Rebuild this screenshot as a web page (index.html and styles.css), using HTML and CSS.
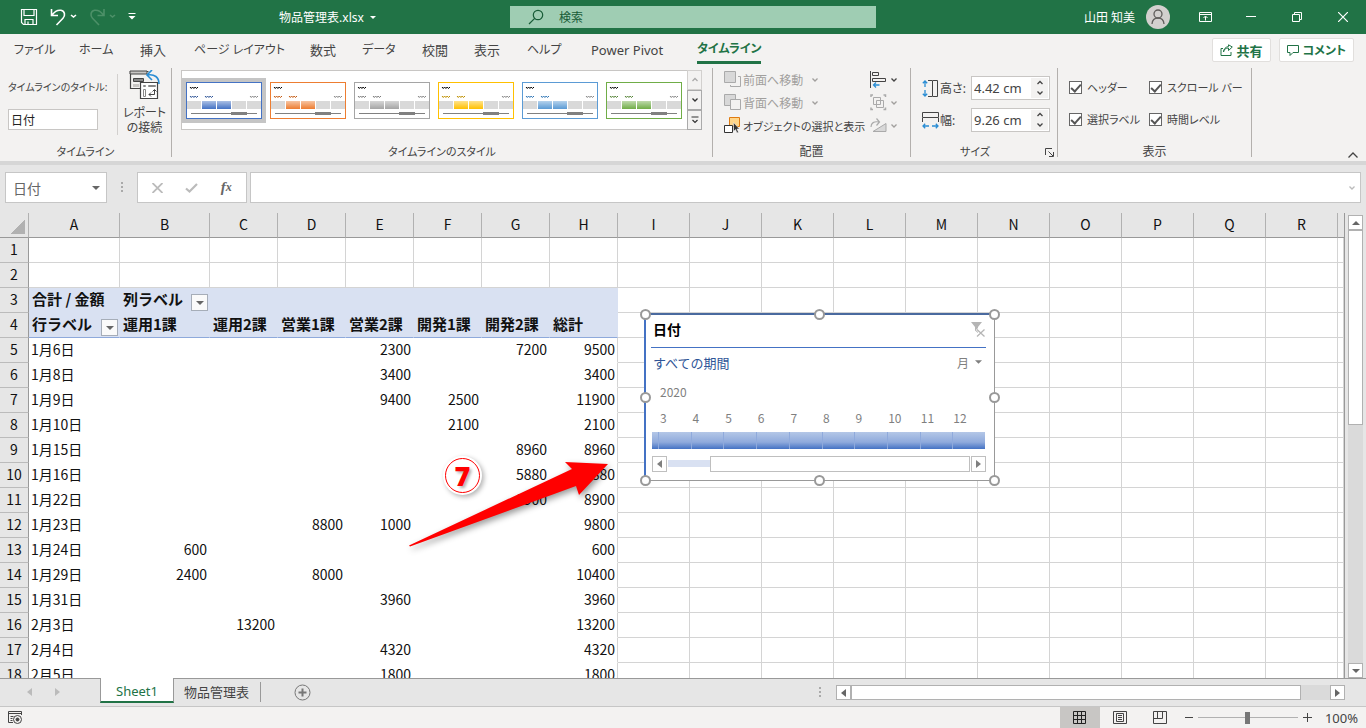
FILE: index.html
```html
<!DOCTYPE html>
<html lang="ja">
<head>
    <meta charset="UTF-8">
    <meta name="viewport" content="width=device-width, initial-scale=1.0">
    <title>物品管理表.xlsx</title>
    <link rel="stylesheet" href="styles.css">
</head>
<body>
    <!-- shared icons -->
    <svg class="defs" aria-hidden="true">
        <defs>
            <linearGradient id="shine" x1="0" y1="0" x2="0" y2="1">
                <stop offset="0" stop-color="#fff" stop-opacity=".55"/>
                <stop offset="1" stop-color="#fff" stop-opacity="0"/>
            </linearGradient>
            <symbol id="thumb" viewBox="0 0 76 37">
                <rect x=".5" y=".5" width="75" height="36" fill="#fff" stroke="var(--c)"/>
                <path d="M4 5l1.3 1.5L6.6 5l1.3 1.5L9.2 5l1.3 1.5L12 5" fill="none" stroke="#000"/>
                <path d="M4 14l1.3 1.5L6.6 14l1.3 1.5L9.2 14l1.3 1.5L12 14M19 14l1.3 1.5L21.6 14l1.3 1.5L24.2 14l1.3 1.5L27 14" fill="none" stroke="var(--d)"/>
                <path d="M64 14l1.3 1.5L66.6 14l1.3 1.5L69.2 14l1.3 1.5L72 14" fill="none" stroke="#888"/>
                <path d="M1 19h14v8H1zM46 19h14v8H46zM61 19h14v8H61z" fill="#d9d9d9"/>
                <path d="M16 19h14v8H16zM31 19h14v8H31z" fill="var(--c)"/>
                <path d="M16 19h14v8H16zM31 19h14v8H31z" fill="url(#shine)"/>
                <path d="M5 31h66v1H5zM45 30h16v3H45z" fill="#808080"/>
            </symbol>
            <symbol id="chev" viewBox="0 0 8 6"><path d="M1.500 1.500L4 4l2.500-2.500" fill="none" stroke="currentColor" stroke-width="1.300"/></symbol>
            <symbol id="chevup" viewBox="0 0 8 6"><path d="M1.500 4L4 1.500 6.500 4" fill="none" stroke="currentColor" stroke-width="1.300"/></symbol>
            <symbol id="tri" viewBox="0 0 8 4"><path d="M0 0h8L4 4z" fill="currentColor"/></symbol>
            <symbol id="triup" viewBox="0 0 8 4"><path d="M0 4h8L4 0z" fill="currentColor"/></symbol>
            <symbol id="trileft" viewBox="0 0 5 8"><path d="M5 0v8L0 4z" fill="currentColor"/></symbol>
            <symbol id="triright" viewBox="0 0 5 8"><path d="M0 0v8l5-4z" fill="currentColor"/></symbol>
        </defs>
    </svg>

    <header class="titlebar">
        <div class="quick">
            <button aria-label="上書き保存"><svg width="18" height="18" viewBox="0 0 18 18" fill="none" stroke="#fff" stroke-width="1.200"><path d="M1.500 1.500h15v15h-13l-2-2zM4 1.500v6h10v-6M5 16.500v-5h8v5M8 16v-2.500"/></svg></button>
            <button class="undo" aria-label="元に戻す"><svg width="27" height="18" viewBox="0 0 27 18" fill="none" stroke="#fff" stroke-width="1.600"><path d="M1.500 1v6.500H8M2 7C5 3 8 1.800 11 2.300c4 .7 4.500 5.500 2 8L6.500 17"/><path d="M21 7l2.500 2L26 7"/></svg></button>
            <button class="redo" aria-label="やり直し"><svg width="27" height="18" viewBox="0 0 27 18" fill="none" stroke="#4d9068" stroke-width="1.600"><path d="M15 1v6.500H8.500M14.500 7C11.500 3 8.500 1.800 5.500 2.300c-4 .7-4.500 5.500-2 8L10 17"/><path d="M21 7l2.500 2L26 7"/></svg></button>
            <button aria-label="カスタマイズ"><svg width="8" height="8" viewBox="0 0 8 8"><path d="M.5 0h7v1h-7zM.5 3h7L4 6.500z" fill="#fff"/></svg></button>
        </div>
        <button class="filename">物品管理表.xlsx <svg width="6" height="3"><use href="#tri"/></svg></button>
        <label class="search">
            <svg width="16" height="16" viewBox="0 0 16 16" fill="none" stroke="#185c37" stroke-width="1.200"><circle cx="10" cy="6" r="4.700"/><path d="M6.700 9.300L1 15"/></svg>
            <input type="text" placeholder="検索" aria-label="検索">
        </label>
        <div class="account">
            <span>山田 知美</span>
            <svg width="24" height="24" viewBox="0 0 24 24"><circle cx="12" cy="12" r="12" fill="#d2d0ce"/><g fill="none" stroke="#605e5c" stroke-width="1.300"><circle cx="12" cy="9" r="4"/><path d="M6 19c.3-4 3-6 6-6s5.700 2 6 6"/></g></svg>
        </div>
        <div class="winbtns">
            <button aria-label="リボンの表示オプション"><svg width="13" height="10" viewBox="0 0 13 10" fill="none" stroke="#fff"><path d="M.5.5h12v9H.5zM.5 2.500h12M6.500 8.500v-4M4.500 6l2-2 2 2"/></svg></button>
            <button aria-label="最小化"><svg width="10" height="10" viewBox="0 0 10 10" stroke="#fff"><path d="M0 4.500h10"/></svg></button>
            <button aria-label="元に戻す(縮小)"><svg width="10" height="10" viewBox="0 0 10 10" fill="none" stroke="#fff"><path d="M.5 2.500h7v7h-7zM2.500 2.500v-2h7v7h-2"/></svg></button>
            <button aria-label="閉じる"><svg width="10" height="10" viewBox="0 0 10 10" stroke="#fff" stroke-width="1.200"><path d="M0 0l10 10M10 0L0 10"/></svg></button>
        </div>
    </header>

    <nav class="tabs">
        <a href="#">ファイル</a>
        <a href="#">ホーム</a>
        <a href="#" class="kanji">挿入</a>
        <a href="#">ページ レイアウト</a>
        <a href="#" class="kanji">数式</a>
        <a href="#">データ</a>
        <a href="#" class="kanji">校閲</a>
        <a href="#" class="kanji">表示</a>
        <a href="#">ヘルプ</a>
        <a href="#" class="kanji">Power Pivot</a>
        <a href="#" class="active">タイムライン</a>
        <div class="share">
            <button class="kanji"><svg width="13" height="12" viewBox="0 0 13 12" fill="none" stroke="#217346"><path d="M3 4.500H1v7h10V8M3.500 8c.5-3 2.500-4 5-4V6.500L12.300 3 8.500.8v1.700C5.500 3 3.700 5 3.500 8z"/></svg>共有</button>
            <button><svg width="12" height="11" viewBox="0 0 12 11" fill="none" stroke="#217346"><path d="M.5.5h11v7H6l-3 3v-3H.5z"/></svg>コメント</button>
        </div>
    </nav>

    <section class="ribbon">
        <div class="group g-timeline">
            <div class="body">
                <div class="caption">
                    <label for="tlTitle">タイムラインのタイトル:</label>
                    <input type="text" id="tlTitle" value="日付">
                </div>
                <button class="report">
                    <svg width="32" height="30" viewBox="0 0 32 30" fill="none">
                        <path d="M11 18.500H1.500v-17h18" stroke="#444" stroke-width="1.200"/><path d="M1 1h17v3H1z" fill="#c8c6c4" stroke="#444"/>
                        <path d="M4.500 8.500h10v3h-10z" fill="#888" stroke="#444"/><path d="M4 14h6v3H4z" fill="#c8c6c4"/>
                        <path d="M11.500 12.500h17v16h-17z" fill="#fff" stroke="#444" stroke-width="1.200"/>
                        <path d="M14.500 15.500h2v1h-2zM19.500 15.500h7v1h-7zM14.500 19.500h2v7h-2z" stroke="#888"/>
                        <path d="M20 24.500h5.500V20M22 22.500l-2 2 2 2M23.500 21.500l2-2 2 2" stroke="#444"/>
                        <path d="M23 0l-5 5 5 5M18.500 5c7-1 11.500 2 11.500 9" stroke="#2a8dd4" stroke-width="1.600"/>
                    </svg>
                    <span>レポート<br>の接続</span>
                </button>
            </div>
            <h2>タイムライン</h2>
        </div>
        <div class="group g-styles">
            <div class="body">
                <div class="gallery">
                    <button class="st blue selected" aria-label="青"><svg width="76" height="37"><use href="#thumb"/></svg></button>
                    <button class="st orange" aria-label="オレンジ"><svg width="76" height="37"><use href="#thumb"/></svg></button>
                    <button class="st gray" aria-label="灰色"><svg width="76" height="37"><use href="#thumb"/></svg></button>
                    <button class="st gold" aria-label="ゴールド"><svg width="76" height="37"><use href="#thumb"/></svg></button>
                    <button class="st sky" aria-label="水色"><svg width="76" height="37"><use href="#thumb"/></svg></button>
                    <button class="st green" aria-label="緑"><svg width="76" height="37"><use href="#thumb"/></svg></button>
                    <div class="gallery-scroll">
                        <button class="off" aria-label="上へ"><svg width="8" height="6"><use href="#chevup"/></svg></button>
                        <button aria-label="下へ"><svg width="8" height="6"><use href="#chev"/></svg></button>
                        <button aria-label="その他"><svg width="8" height="8" viewBox="0 0 8 8" fill="none" stroke="#333" stroke-width="1.200"><path d="M.5 1h7M1.500 4L4 6.500 6.500 4"/></svg></button>
                    </div>
                </div>
            </div>
            <h2>タイムラインのスタイル</h2>
        </div>
        <div class="group g-arrange">
            <div class="body">
                <div class="stack">
                    <button disabled><svg width="17" height="17" viewBox="0 0 17 17" fill="none" stroke="#aaa"><path d="M.5.500h11v11H.5z" fill="#d8d8d8"/><path d="M14 5.500h2.500v10h-10V14"/></svg>前面へ移動<svg class="dd" width="8" height="6"><use href="#chev"/></svg></button>
                    <button disabled><svg width="17" height="17" viewBox="0 0 17 17" stroke="#aaa"><path d="M.5.500h11v11H.5z" fill="#d8d8d8"/><path d="M6.500 5.500h10v10h-10z" fill="#f3f2f1"/></svg>背面へ移動<svg class="dd" width="8" height="6"><use href="#chev"/></svg></button>
                    <button><svg width="17" height="17" viewBox="0 0 17 17"><path d="M5.500.500h10v9h-10z" fill="#ffd68a" stroke="#e07b10"/><path d="M.5 8.500h8v7h-8z" fill="#fff" stroke="#333"/><path d="M9.500 5.500v9l2-2 1.500 3.500 1.500-.8-1.500-3.200h2.500z" fill="#333" stroke="#fff" stroke-width=".5"/></svg>オブジェクトの選択と表示</button>
                </div>
                <div class="stack icons">
                    <button aria-label="配置"><svg width="17" height="17" viewBox="0 0 17 17" fill="none" stroke="#444"><path d="M.5 0v17M2.500 1.500h6v3h-6zM2.500 7.500h13v3h-13z"/><path d="M9.500 14h-6M6 11.500L3.500 14 6 16.500" stroke="#2a8dd4" stroke-width="1.300"/></svg><svg width="8" height="6"><use href="#chev"/></svg></button>
                    <button disabled aria-label="グループ化"><svg width="17" height="17" viewBox="0 0 17 17" fill="none" stroke="#aaa"><path d="M3.500 3.500h7v7h-7zM6.500 6.500h7v7h-7z"/><path d="M1 3V1h2M13.500 1h2v2M1 13.500v2h2M13.500 15.500h2v-2" stroke-width="1.500"/></svg><svg width="8" height="6"><use href="#chev"/></svg></button>
                    <button disabled aria-label="回転"><svg width="17" height="15" viewBox="0 0 17 15" fill="none" stroke="#aaa"><path d="M3 13.500h13v-8z" fill="#d8d8d8"/><path d="M1 9c0-4 3-6 8-5M6.500.5L9.500 4l-3 3.500" stroke-width="1.200"/></svg><svg width="8" height="6"><use href="#chev"/></svg></button>
                </div>
            </div>
            <h2 class="kanji">配置</h2>
        </div>
        <div class="group g-size">
            <div class="body rows">
                <div class="field">
                    <svg width="17" height="17" viewBox="0 0 17 17" fill="none" stroke="#444"><path d="M6 .5h4M6 16.500h4M10.500.500h5v16h-5z"/><path d="M3 1v6M3 10v6M.8 3.200L3 1l2.200 2.200M.8 13.800L3 16l2.200-2.200" stroke="#2a8dd4" stroke-width="1.300"/></svg>
                    <label for="h">高さ:</label>
                    <div class="spin"><input type="text" id="h" value="4.42 cm"><span><button aria-label="増やす"><svg width="8" height="6"><use href="#chevup"/></svg></button><button aria-label="減らす"><svg width="8" height="6"><use href="#chev"/></svg></button></span></div>
                </div>
                <div class="field">
                    <svg width="17" height="17" viewBox="0 0 17 17" fill="none" stroke="#444"><path d="M.5 6v4M16.500 6v4M.5.500h16v5H.5z"/><path d="M1 14h6M10 14h6M3.200 11.800L1 14l2.200 2.200M13.800 11.800L16 14l-2.200 2.200" stroke="#2a8dd4" stroke-width="1.300"/></svg>
                    <label for="w">幅:</label>
                    <div class="spin"><input type="text" id="w" value="9.26 cm"><span><button aria-label="増やす"><svg width="8" height="6"><use href="#chevup"/></svg></button><button aria-label="減らす"><svg width="8" height="6"><use href="#chev"/></svg></button></span></div>
                </div>
            </div>
            <div class="foot"><h2>サイズ</h2><button aria-label="サイズの詳細"><svg width="9" height="9" viewBox="0 0 9 9" fill="none" stroke="#444"><path d="M.5 7V.5H7M3.500 3.500L8 8M8.500 4v4.500H4"/></svg></button></div>
        </div>
        <div class="group g-show">
            <div class="body checks">
                <label><input type="checkbox" checked>ヘッダー</label>
                <label><input type="checkbox" checked>スクロール バー</label>
                <label><input type="checkbox" checked>選択ラベル</label>
                <label><input type="checkbox" checked>時間レベル</label>
            </div>
            <h2 class="kanji">表示</h2>
        </div>
        <button class="collapse" aria-label="リボンを折りたたむ"><svg width="10" height="6" viewBox="0 0 10 6" fill="none" stroke="#444" stroke-width="1.300"><path d="M.5 5.500L5 1l4.500 4.500"/></svg></button>
    </section>

    <section class="formula">
        <div class="namebox"><input type="text" value="日付" aria-label="名前ボックス"><button aria-label="名前の一覧"><svg width="8" height="4"><use href="#tri"/></svg></button></div>
        <svg class="dots" width="2" height="10" viewBox="0 0 2 10" fill="#aaa"><path d="M0 0h2v2H0zM0 4h2v2H0zM0 8h2v2H0z"/></svg>
        <div class="fx">
            <button aria-label="キャンセル"><svg width="11" height="10" viewBox="0 0 11 10" stroke="#bbb" stroke-width="1.800"><path d="M.5 0l10 10M10.500 0l-10 10"/></svg></button>
            <button aria-label="入力"><svg width="13" height="10" viewBox="0 0 13 10" fill="none" stroke="#bbb" stroke-width="2.200"><path d="M1 5.500l3.500 3L12 1"/></svg></button>
            <button class="fn">f<small>x</small></button>
        </div>
        <div class="fbox"><input type="text" aria-label="数式バー"><button aria-label="展開"><svg width="8" height="6"><use href="#chev"/></svg></button></div>
    </section>

    <main class="work">
        <div class="sheet">
            <table class="grid">
                <colgroup>
                    <col class="c-num"><col class="c-a"><col class="c-b">
                    <col class="c-val" span="6"><col class="c-std" span="10"><col>
                </colgroup>
                <thead><tr id="heads"></tr></thead>
                <tbody id="rows"></tbody>
            </table>

            <div class="slicer">
                <i class="hd nw"></i><i class="hd n"></i><i class="hd ne"></i><i class="hd w"></i>
                <i class="hd e"></i><i class="hd sw"></i><i class="hd s"></i><i class="hd se"></i>
                <div class="sl-head"><strong>日付</strong><button aria-label="フィルターのクリア"><svg width="16" height="15" viewBox="0 0 16 15" fill="none" stroke="#b5b5b5"><path d="M1 0h11L8 5v6l-3-2.500V5z" fill="#b5b5b5" stroke="none"/><path d="M7 7l8 8M15 7l-8 8" stroke="#fff" stroke-width="3"/><path d="M7 7.500l7.500 7M14.500 7.500l-7.500 7" stroke-width="1.300"/></svg></button></div>
                <div class="sl-sub"><span>すべての期間</span><button>月 <svg width="7" height="4"><use href="#tri"/></svg></button></div>
                <div class="sl-year">2020</div>
                <div class="sl-months"><span>3</span><span>4</span><span>5</span><span>6</span><span>7</span><span>8</span><span>9</span><span>10</span><span>11</span><span>12</span></div>
                <div class="sl-bar"><i></i><i></i><i></i><i></i><i></i><i></i><i></i><i></i><i></i><i></i></div>
                <div class="sl-scroll">
                    <button aria-label="左へ"><svg width="5" height="8"><use href="#trileft"/></svg></button>
                    <div class="sl-track"><div></div></div>
                    <button aria-label="右へ"><svg width="5" height="8"><use href="#triright"/></svg></button>
                </div>
            </div>

            <svg class="arrow" width="220" height="110" viewBox="0 0 220 110"><path d="M9 95.500L172 19l-7-7 43 2-29 31-3-9L10 96.500z" fill="#f00"/></svg>
            <div class="step">7</div>
        </div>
        <div class="vscroll">
            <button aria-label="上へ"><svg width="8" height="4"><use href="#triup"/></svg></button>
            <div class="track"><div class="bar"></div></div>
            <button aria-label="下へ"><svg width="8" height="4"><use href="#tri"/></svg></button>
        </div>
    </main>

    <footer>
        <div class="sheetbar">
            <div class="sheetnav">
                <button aria-label="前のシート"><svg width="5" height="8"><use href="#trileft"/></svg></button>
                <button aria-label="次のシート"><svg width="5" height="8"><use href="#triright"/></svg></button>
            </div>
            <button class="sheettab current">Sheet1</button>
            <button class="sheettab">物品管理表</button>
            <button class="add" aria-label="新しいシート"><svg width="17" height="17" viewBox="0 0 17 17" fill="none" stroke="#777"><circle cx="8.500" cy="8.500" r="7.500"/><path d="M8.500 4.500v8M4.500 8.500h8" stroke-width="2"/></svg></button>
            <svg class="dots" width="2" height="10" viewBox="0 0 2 10" fill="#aaa"><path d="M0 0h2v2H0zM0 4h2v2H0zM0 8h2v2H0z"/></svg>
            <div class="hscroll">
                <button aria-label="左へ"><svg width="5" height="8"><use href="#trileft"/></svg></button>
                <div class="track"><div class="bar"></div></div>
                <button aria-label="右へ"><svg width="5" height="8"><use href="#triright"/></svg></button>
            </div>
        </div>
        <div class="status">
            <button class="macro" aria-label="マクロの記録"><svg width="15" height="13" viewBox="0 0 15 13" fill="none" stroke="#444"><path d="M5 11.500H.5V.5h13V4M.5 2.500h13M2.500 5.500h3M2.500 7.500h2M2.500 9.500h2"/><circle cx="9.500" cy="8.500" r="4"/><circle cx="9.500" cy="8.500" r="1.500" fill="#444"/></svg></button>
            <button class="view on" aria-label="標準"><svg width="13" height="13" viewBox="0 0 13 13" fill="none" stroke="#222"><path d="M.5.500h12v12H.5zM4.500.5v12M8.500.5v12M.5 4.500h12M.5 8.500h12"/></svg></button>
            <button class="view" aria-label="ページ レイアウト"><svg width="14" height="13" viewBox="0 0 14 13" fill="none" stroke="#444"><path d="M.5.500h13v12H.5zM3.500 2.500h7v8h-7zM5 4.500h4M5 6.500h4M5 8.500h4"/></svg></button>
            <button class="view" aria-label="改ページ プレビュー"><svg width="14" height="13" viewBox="0 0 14 13" fill="none" stroke="#444"><path d="M.5.500h13v12H.5zM4.500.5v7M9.500.5v7h-9"/></svg></button>
            <button class="zm" aria-label="縮小"><svg width="8" height="9" viewBox="0 0 8 9" stroke="#444"><path d="M0 4.500h8"/></svg></button>
            <input type="range" min="0" max="100" value="50" aria-label="ズーム">
            <button class="zm" aria-label="拡大"><svg width="9" height="9" viewBox="0 0 9 9" stroke="#444"><path d="M0 4.500h9M4.500 0v9"/></svg></button>
            <span class="pct">100%</span>
        </div>
    </footer>

    <script>
        const columns = "ABCDEFGHIJKLMNOPQR".split("");
        // label, then the values by column
        const data = {
            5: { A: "1月6日", E: 2300, G: 7200, H: 9500 },
            6: { A: "1月8日", E: 3400, H: 3400 },
            7: { A: "1月9日", E: 9400, F: 2500, H: 11900 },
            8: { A: "1月10日", F: 2100, H: 2100 },
            9: { A: "1月15日", G: 8960, H: 8960 },
            10: { A: "1月16日", G: 5880, H: 5880 },
            11: { A: "1月22日", G: 8900, H: 8900 },
            12: { A: "1月23日", D: 8800, E: 1000, H: 9800 },
            13: { A: "1月24日", B: 600, H: 600 },
            14: { A: "1月29日", B: 2400, D: 8000, H: 10400 },
            15: { A: "1月31日", E: 3960, H: 3960 },
            16: { A: "2月3日", C: 13200, H: 13200 },
            17: { A: "2月4日", E: 4320, H: 4320 },
            18: { A: "2月5日", E: 1800, H: 1800 }
        };
        const filter = '<button class="filter" aria-label="フィルター"><svg width="8" height="4"><use href="#tri"/></svg></button>';
        const titles = {
            3: { A: "合計 / 金額", B: filter + "列ラベル" },
            4: { A: filter + "行ラベル", B: "運用1課", C: "運用2課", D: "営業1課", E: "営業2課", F: "開発1課", G: "開発2課", H: "総計" }
        };

        document.getElementById("heads").innerHTML =
            '<th class="corner"></th>' + columns.map(c => `<th>${c}</th>`).join("") + "<th></th>";

        let html = "";
        for (let r = 1; r <= 18; r++) {
            html += `<tr><th>${r}</th>`;
            columns.forEach((c, i) => {
                let cls = "";
                let text = "";
                if (i < 8 && titles[r]) {
                    cls = r === 4 ? "title last" : "title";
                    text = titles[r][c] || "";
                } else if (i < 8 && data[r]) {
                    cls = c === "A" ? "pivot" : c === "H" ? "pivot num total" : "pivot num";
                    text = data[r][c] || "";
                }
                html += `<td class="${cls}">${text}</td>`;
            });
            html += "<td></td></tr>";
        }
        document.getElementById("rows").innerHTML = html;
    </script>
</body>
</html>
```
FILE: styles.css
```css
* {
    box-sizing: border-box;
}

body {
    margin: 0;
    height: 100vh;
    display: flex;
    flex-direction: column;
    overflow: hidden;
    background: #e6e6e6;
    color: #444;
    font-family: "Noto Sans", "Noto Sans CJK JP", sans-serif;
    font-size: 12px;
    font-feature-settings: "palt";
}

button, input {
    font: inherit;
    color: inherit;
    font-feature-settings: inherit;
    border: none;
    background: none;
    padding: 0;
    margin: 0;
    min-width: 0;
    outline: none;
}

button {
    display: flex;
    align-items: center;
    justify-content: center;
    white-space: nowrap;
}

svg {
    display: block;
    flex: none;
}

.defs {
    position: absolute;
    width: 0;
    height: 0;
}

/* title bar */
.titlebar {
    flex: none;
    height: 34px;
    background: #217346;
    color: #fff;
    display: flex;
    align-items: center;
}

.quick {
    display: flex;
    align-items: center;
    gap: 12px;
    padding-left: 20px;
    width: 277px;
}

.filename {
    gap: 6px;
    width: 101px;
}

.search {
    margin-left: 132px;
    width: 366px;
    height: 22px;
    background: #9fcdb3;
    display: flex;
    align-items: center;
    gap: 15px;
    padding-left: 18px;
}

.search input::placeholder {
    color: #185c37;
    opacity: 1;
}

.account {
    margin-left: auto;
    display: flex;
    align-items: center;
    gap: 11px;
}

.winbtns {
    display: flex;
    margin-left: 12px;
}

.winbtns button {
    width: 46px;
    height: 34px;
}

/* ribbon tabs */
.tabs {
    flex: none;
    height: 32px;
    padding: 0 12px 0 14px;
    background: #f3f2f1;
    display: grid;
    grid-template-columns: 65px 61px 54px 116px 52px 60px 52px 53px 64px 106px 64px 1fr;
    align-items: center;
}

.tabs a {
    color: #444;
    text-decoration: none;
    white-space: nowrap;
    line-height: 24px;
}

.kanji {
    font-size: 13px;
}

.tabs .active {
    color: #217346;
    font-weight: bold;
    border-bottom: 3px solid #217346;
}

.share {
    justify-self: end;
    display: flex;
    gap: 8px;
}

.share button {
    height: 24px;
    padding: 0 7px;
    gap: 4px;
    background: #fff;
    border: 1px solid #e1dfdd;
    border-radius: 2px;
    color: #217346;
    font-weight: bold;
}

/* ribbon */
.ribbon {
    flex: none;
    height: 99px;
    padding-top: 2px;
    background: #f3f2f1;
    border-bottom: 4px solid #d6d6d6;
    display: flex;
}

.group {
    height: 89px;
    border-right: 1px solid #b3b0ad;
    display: flex;
    flex-direction: column;
}

.group .body {
    flex: 1;
    display: flex;
}

.group h2 {
    margin: 0;
    font-size: 11px;
    font-weight: normal;
    line-height: 10px;
    text-align: center;
}

.group h2.kanji {
    font-size: 12px;
}

.g-timeline {
    width: 172px;
}

.g-styles {
    width: 541px;
}

.g-arrange {
    width: 198px;
}

.g-size {
    width: 147px;
}

.g-show {
    width: 194px;
}

.caption {
    width: 118px;
    margin: 6px 0 12px;
    padding-left: 8px;
    border-right: 1px solid #d2d0ce;
    white-space: nowrap;
}

.caption label {
    display: block;
    line-height: 26px;
    font-size: 10px;
}

.caption input {
    width: 90px;
    height: 21px;
    margin-top: 9px;
    padding: 0 2px;
    border: 1px solid #c8c6c4;
    background: #fff;
    font-size: 12px;
    color: #222;
}

.report {
    flex: 1;
    flex-direction: column;
    justify-content: flex-start;
    padding-top: 2px;
    gap: 5px;
    line-height: 15px;
}

.gallery {
    display: flex;
    align-items: center;
    height: 60px;
    margin: 2px 0 0 9px;
    border: 1px solid #c8c6c4;
    border-right: none;
    background: #fff;
}

.st {
    width: 84px;
    height: 45px;
}

.selected {
    background: #c5c5c5;
}

.blue { --c: #4472c4; --d: #2f5597; }
.orange { --c: #ed7d31; --d: #c55a11; }
.gray { --c: #a5a5a5; --d: #7b7b7b; }
.gold { --c: #ffc000; --d: #bf9000; }
.sky { --c: #5b9bd5; --d: #2e75b6; }
.green { --c: #70ad47; --d: #548235; }

.gallery-scroll {
    width: 15px;
    height: 60px;
    display: flex;
    flex-direction: column;
    margin-left: 1px;
}

.gallery-scroll button {
    flex: 1;
    border: 1px solid #aaa;
    background: #f3f2f1;
    color: #333;
}

.gallery-scroll .off {
    border-color: #d2d0ce;
    color: #aaa;
}

.stack {
    display: flex;
    flex-direction: column;
    padding-left: 11px;
    width: 157px;
}

.stack button {
    height: 23px;
    gap: 2px;
    justify-content: flex-start;
}

.stack button:disabled {
    color: #a19f9d;
}

.stack .dd {
    margin-left: 6px;
}

.stack button:last-child:not(:disabled) {
    font-size: 11px;
}

.stack.icons {
    padding: 0;
    width: 36px;
}

.icons button {
    gap: 3px;
}

.rows {
    flex-direction: column;
    gap: 8px;
    padding: 8px 7px 0 11px;
}

.field {
    display: flex;
    align-items: center;
    gap: 1px;
    height: 24px;
}

.spin {
    margin-left: auto;
    display: flex;
    width: 79px;
    height: 24px;
    padding: 1px;
    background: #fff;
    border: 1px solid #c8c6c4;
}

.spin input {
    flex: 1;
    padding-left: 1px;
    font-size: 13px;
}

.spin span {
    display: flex;
    flex-direction: column;
    width: 17px;
    background: #f3f2f1;
}

.spin span button {
    flex: 1;
}

.foot {
    display: flex;
    align-items: center;
    height: 10px;
}

.foot h2 {
    flex: 1;
    padding-right: 6px;
}

.foot button {
    margin-right: 3px;
}

.group .checks {
    display: grid;
    grid-template-columns: 80px 1fr;
    grid-auto-rows: 32px;
    padding: 3px 0 0 11px;
}

.checks label {
    display: flex;
    align-items: center;
    gap: 5px;
    font-size: 11px;
    white-space: nowrap;
}

.checks input {
    appearance: none;
    width: 13px;
    height: 13px;
    border: 1px solid #666;
    background: #fff;
    display: grid;
    place-items: center;
}

.checks input:checked::after {
    content: "";
    width: 4px;
    height: 8px;
    margin-bottom: 2px;
    border: solid #555;
    border-width: 0 2px 2px 0;
    transform: rotate(42deg);
}

.collapse {
    margin: auto 8px 3px auto;
}

/* formula bar */
.formula {
    flex: none;
    height: 48px;
    padding: 7px 5px 0;
    display: flex;
    align-items: flex-start;
}

.namebox, .fx, .fbox {
    height: 31px;
    background: #fff;
    border: 1px solid #c6c6c6;
    display: flex;
    align-items: center;
}

.namebox {
    width: 102px;
    padding: 0 6px 0 7px;
    color: #666;
    font-size: 14px;
}

.namebox input {
    flex: 1;
}

.formula .dots {
    margin: 10px 14px 0;
}

.fx {
    width: 110px;
    justify-content: space-around;
    padding: 0 3px;
}

.fn {
    font: italic bold 15px "Liberation Serif", serif;
    color: #666;
}

.fn small {
    font-size: 12px;
}

.fbox {
    flex: 1;
    margin-left: 3px;
    padding-right: 4px;
    color: #bbb;
}

.fbox input {
    flex: 1;
}

/* sheet */
.work {
    flex: 1;
    min-height: 0;
    display: flex;
}

.sheet {
    position: relative;
    flex: 1;
    overflow: hidden;
    border-right: 1px solid #999;
    background: #fff;
}

.grid {
    width: 100%;
    table-layout: fixed;
    border-collapse: separate;
    border-spacing: 0;
    font-family: "Noto Sans CJK JP", sans-serif;
    font-feature-settings: normal;
    font-size: 14px;
    color: #111;
}

.c-num { width: 29px; }
.c-a { width: 91px; }
.c-b { width: 90px; }
.c-val { width: 68px; }
.c-std { width: 72px; }

.grid th, .grid td {
    height: 25px;
    padding: 0 2px 2px;
    line-height: 20px;
    white-space: nowrap;
    border-right: 1px solid #d4d4d4;
    border-bottom: 1px solid #d4d4d4;
}

.grid th {
    padding: 0 0 2px;
    background: #e6e6e6;
    font-weight: normal;
}

.grid thead th {
    border-bottom-color: #999;
    border-right: 1px solid #b1b1b1;
}

.grid thead th:last-child {
    border-right: none;
}

.grid tbody th {
    border-right-color: #999;
    border-bottom-color: #bbb;
}

.grid .corner {
    background: linear-gradient(135deg, #e6e6e6 58%, #b1b1b1 58%) no-repeat 8px 4px / 17px 17px #e6e6e6;
}

.grid .title {
    padding: 0 3px 2px;
    background: #d9e1f2;
    border-color: #d9e1f2;
    font-weight: bold;
    font-size: 15px;
}

.grid .last {
    border-bottom-color: #8ea9db;
}

.grid .pivot {
    border-color: #fff;
}

.grid .num {
    text-align: right;
}

.grid .total {
    border-right-color: #d4d4d4;
}

.filter {
    float: right;
    width: 17px;
    height: 17px;
    margin: 5px -2px -2px 0;
    border: 1px solid #a6adb8;
    background: #fafafa;
    color: #666;
}

/* timeline slicer, lies over the cells */
.slicer {
    position: absolute;
    left: 644px;
    top: 100px;
    width: 351px;
    height: 168px;
    padding: 2px 8px 0 5px;
    background: #fff;
    border: 1px solid #999;
    border-left: 2px solid #4472c4;
    border-top: 2px solid #4a6a9f;
    font-family: "Noto Sans CJK JP", sans-serif;
    font-feature-settings: normal;
    color: #7f7f7f;
}

.hd {
    position: absolute;
    width: 11px;
    height: 11px;
    border: 2px solid #999;
    border-radius: 50%;
    background: #fff;
}

.nw, .n, .ne { top: -6px; }
.w, .e { top: 77px; }
.sw, .s, .se { bottom: -6px; }
.nw, .w, .sw { left: -6px; }
.n, .s { left: 168px; }
.ne, .e, .se { right: -6px; }

.sl-head {
    display: flex;
    align-items: center;
    justify-content: space-between;
    height: 31px;
    border-bottom: 1px solid #4472c4;
    padding: 0 0 6px 2px;
    font-size: 14px;
    color: #000;
}

.sl-sub {
    display: flex;
    justify-content: space-between;
    align-items: center;
    height: 30px;
    padding: 0 4px 2px 2px;
    font-size: 13px;
    color: #2f5597;
}

.sl-sub button {
    gap: 6px;
    font-size: 12px;
    color: #7f7f7f;
}

.sl-year {
    padding-left: 9px;
    line-height: 27px;
}

.sl-months {
    display: flex;
    margin-bottom: 2px;
    padding-left: 9px;
    line-height: 25px;
}

.sl-months span {
    flex: 1;
}

.sl-bar {
    display: flex;
    height: 17px;
    margin: 0 1px;
    padding-left: 6px;
    background: linear-gradient(#b4c7e7, #8faadc 60%, #4472c4);
}

.sl-bar i {
    flex: 1;
    border-left: 1px solid #8faadc;
}

.sl-scroll {
    display: flex;
    align-items: center;
    gap: 1px;
    margin: 7px 0 0 1px;
}

.sl-scroll button {
    width: 15px;
    height: 16px;
    border: 1px solid #bfbfbf;
}

.sl-track {
    flex: 1;
    height: 16px;
    padding-left: 42px;
    background: linear-gradient(#fff 4px, #d9e1f2 4px, #d9e1f2 11px, #fff 11px);
}

.sl-track div {
    height: 16px;
    background: #fff;
    border: 1px solid #bfbfbf;
}

/* callout */
.arrow {
    position: absolute;
    left: 400px;
    top: 237px;
    filter: drop-shadow(2px 3px 3px rgba(0, 0, 0, 0.4));
}

.step {
    position: absolute;
    left: 445px;
    top: 245px;
    width: 35px;
    height: 35px;
    border: 1px solid #f00;
    border-radius: 50%;
    background: #fff;
    box-shadow: 0 0 0 2px #fff, 2px 2px 5px 2px rgba(0, 0, 0, 0.3);
    color: #f00;
    font: 800 27px/33px "Open Sans", sans-serif;
    text-align: center;
    text-shadow: 2px 2px 3px rgba(0, 0, 0, 0.3);
}

/* scroll bars */
.vscroll {
    width: 21px;
    padding: 2px 3px 0;
    display: flex;
    flex-direction: column;
}

.vscroll button, .hscroll button {
    flex: none;
    width: 15px;
    height: 15px;
    border: 1px solid #b1b1b1;
    background: #fff;
    color: #666;
}

.track {
    flex: 1;
    background: #dadada;
}

.bar {
    background: #fff;
    border: 1px solid #b1b1b1;
}

.vscroll .bar {
    height: 45%;
}

/* sheet tabs */
.sheetbar {
    height: 29px;
    display: flex;
    align-items: flex-start;
    border-top: 1px solid #999;
    border-bottom: 1px solid #c6c6c6;
}

.sheetnav {
    width: 100px;
    height: 26px;
    padding-left: 27px;
    display: flex;
    gap: 23px;
    color: #bbb;
}

.sheettab {
    height: 20px;
    margin-top: 3px;
    padding: 0 11px 2px 10px;
    border-right: 1px solid #999;
    font-size: 13px;
}

.sheettab.current {
    width: 74px;
    height: 25px;
    margin-top: -1px;
    padding: 2px 0 0;
    background: #fff;
    color: #217346;
    border-left: 1px solid #999;
    border-bottom: 2px solid #217346;
}

.add {
    margin: 5px 0 0 33px;
}

.sheetbar .dots {
    margin: 8px 15px 0 auto;
}

.hscroll {
    display: flex;
    width: 38%;
    max-width: 509px;
    margin: 6px 21px 0 0;
}

.hscroll .bar {
    width: 94%;
    height: 15px;
}

/* status bar */
.status {
    height: 21px;
    background: #f3f2f1;
    display: flex;
    align-items: center;
    padding: 0 8px;
}

.macro {
    margin-right: auto;
}

.view {
    width: 40px;
    height: 21px;
}

.view.on {
    background: #c8c6c4;
}

.zm {
    margin-left: 5px;
}

.status input {
    appearance: none;
    width: 100px;
    height: 15px;
    margin-left: 5px;
    background: linear-gradient(#f3f2f1 7px, #b1b1b1 7px, #b1b1b1 8px, #f3f2f1 8px);
}

.status input::-webkit-slider-thumb {
    appearance: none;
    width: 5px;
    height: 12px;
    background: #777;
}

.pct {
    margin-left: 13px;
    font-size: 13px;
}
```
